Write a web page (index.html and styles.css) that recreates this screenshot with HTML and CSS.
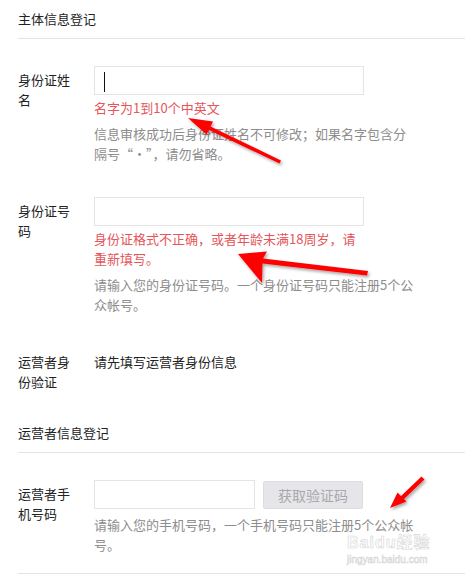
FILE: index.html
```html
<!DOCTYPE html>
<html>
<head>
	<meta charset="utf-8">
	<title>主体信息登记</title>
	<link rel="stylesheet" href="styles.css">
</head>
<body>
	<div class="page">
		<div class="block">
			<h2 class="blockTitle">主体信息登记</h2>
			<div class="blockBody">
				<div class="field">
					<div class="fieldLabel">身份证姓名</div>
					<div class="fieldMain">
						<div class="textInput"><span class="caret"></span></div>
						<p class="error">名字为1到10个中英文</p>
						<p class="tips">信息审核成功后身份证姓名不可修改；如果名字包含分隔号“·”，请勿省略。</p>
					</div>
				</div>
				<div class="field">
					<div class="fieldLabel">身份证号码</div>
					<div class="fieldMain">
						<div class="textInput"></div>
						<p class="error">身份证格式不正确，或者年龄未满18周岁，请重新填写。</p>
						<p class="tips">请输入您的身份证号码。一个身份证号码只能注册5个公众帐号。</p>
					</div>
				</div>
				<div class="field">
					<div class="fieldLabel">运营者身份验证</div>
					<div class="fieldMain">
						<p class="value">请先填写运营者身份信息</p>
					</div>
				</div>
			</div>
		</div>
		<div class="block">
			<h2 class="blockTitle">运营者信息登记</h2>
			<div class="blockBody last">
				<div class="field">
					<div class="fieldLabel">运营者手机号码</div>
					<div class="fieldMain">
						<div class="inline">
							<div class="textInput short"></div>
							<span class="btn">获取验证码</span>
						</div>
						<p class="tips">请输入您的手机号码，一个手机号码只能注册5个公众帐号。</p>
					</div>
				</div>
			</div>
		</div>
		<div class="rule"></div>

		<!-- 截图上的标注箭头 -->
		<svg class="marks" width="465" height="574" viewBox="0 0 465 574">
			<defs>
				<filter id="shadow" x="-20%" y="-20%" width="140%" height="140%">
					<feDropShadow dx="1.5" dy="2" stdDeviation="1.5" flood-color="#000" flood-opacity="0.35"/>
				</filter>
			</defs>
			<g fill="#f00" filter="url(#shadow)">
				<polygon points="188,118 213,121.5 210.5,126.5 281,160.5 279.5,163.5 209,130 206.5,134.5"/>
				<polygon points="238,254 267,251.5 263,258.5 368,271 367,275.5 262.5,263.5 262,283"/>
				<polygon points="390,508 397.5,492.5 401,496 421.5,476.5 424.5,479.5 404,499 406.5,501.5"/>
			</g>
		</svg>
		<div class="watermark">
			<span class="wmLogo">Baidu经验</span>
			<span class="wmUrl">jingyan.baidu.com</span>
		</div>
	</div>
</body>
</html>
```

FILE: styles.css
```css
body, html, div, h2, p, span{
	padding: 0; margin: 0;
}
body{
	background: #fff;
	color: #333;
	font: 13px/20px "Noto Sans CJK SC", "Liberation Sans", sans-serif;
}
.page{
	position: relative;
	width: 465px;
	height: 574px;
	overflow: hidden;
	padding-left: 18px;
	box-sizing: border-box;
}
.blockTitle{
	font-size: 13px;
	font-weight: 400;
	line-height: 22px;
	padding: 8px 0;
	border-bottom: 1px solid #e4e4e4;
	color: #222;
}
.blockBody{
	padding: 27px 0 22px;
	display: flex;
	flex-direction: column;
	gap: 33px;
}
.blockBody.last{
	padding-bottom: 18px;
}
.field{
	display: flex;
}
.fieldLabel{
	width: 60px;
	margin-right: 16px;
	padding-top: 4px;
	color: #222;
}
.fieldMain{
	width: 322px;
}
.textInput{
	position: relative;
	width: 270px;
	height: 29px;
	border: 1px solid #e4e4e4;
	box-sizing: border-box;
	background: #fff;
}
.textInput.short{
	width: 161px;
}
.caret{
	position: absolute;
	left: 9px;
	top: 5px;
	width: 1px;
	height: 20px;
	background: #111;
}
.inline{
	display: flex;
	gap: 8px;
}
.btn{
	width: 100px;
	height: 28px;
	margin-top: 1px;
	border: 1px solid #dcdce0;
	border-radius: 2px;
	box-sizing: border-box;
	background: #e6e6ea;
	color: #a9a9a9;
	font-size: 14px;
	line-height: 26px;
	text-align: center;
}
.error{
	width: 270px;
	margin-top: 3px;
	color: #e5555a;
}
.tips{
	margin-top: 6px;
	color: #8d8d8d;
}
.value{
	padding-top: 4px;
	color: #222;
}
.rule{
	border-top: 1px solid #e4e4e4;
}
.marks{
	position: absolute;
	left: 0;
	top: 0;
	pointer-events: none;
}
.watermark{
	position: absolute;
	left: 347px;
	top: 534px;
	width: 95px;
	color: transparent;
	-webkit-text-stroke: 0.6px #d6d6d6;
	font-family: "Liberation Sans", "Noto Sans CJK SC", sans-serif;
	pointer-events: none;
}
.wmLogo{
	display: block;
	font-size: 16px;
	font-weight: 700;
	line-height: 18px;
	letter-spacing: 1px;
}
.wmUrl{
	display: block;
	font-size: 10px;
	line-height: 14px;
	margin-top: 1px;
}
```
